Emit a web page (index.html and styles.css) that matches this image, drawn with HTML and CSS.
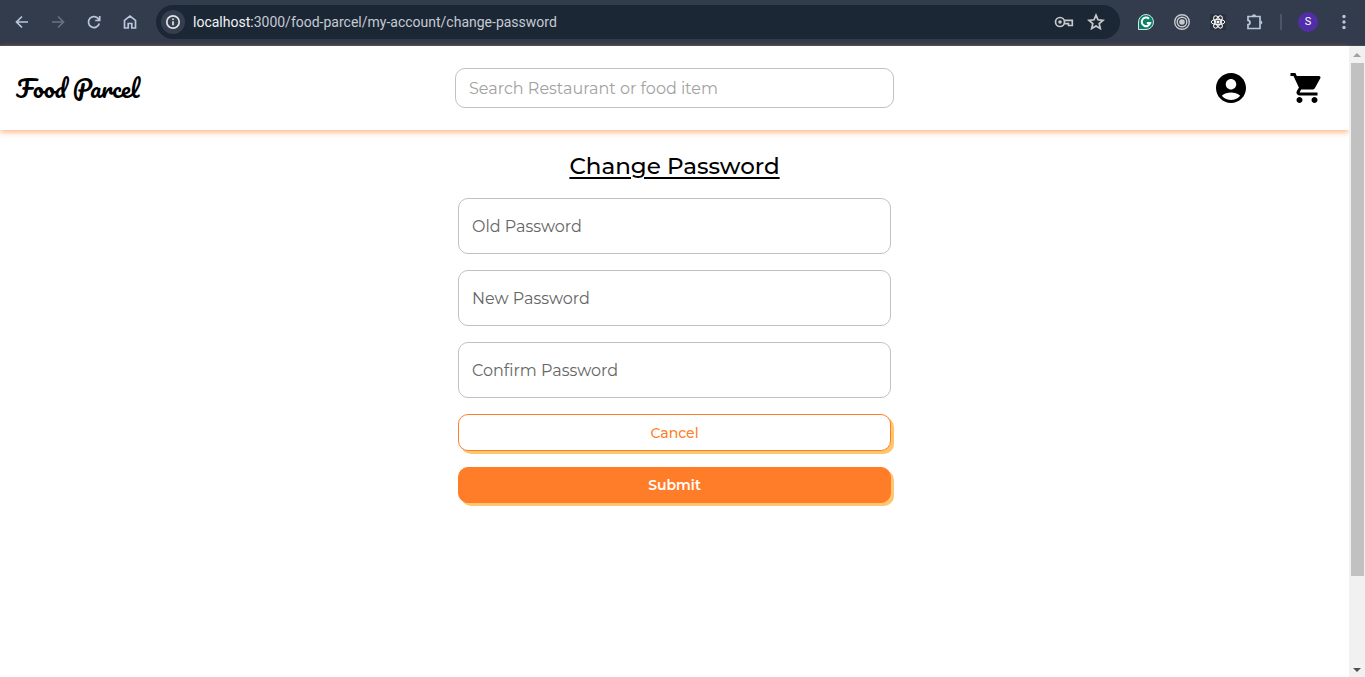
FILE: index.html
```html
<!DOCTYPE html>
<html lang="en">
<head>
<meta charset="utf-8">
<meta name="viewport" content="width=device-width, initial-scale=1">
<title>Food Parcel - Change Password</title>
<link rel="stylesheet" href="styles.css">
</head>
<body>
<div class="toolbar">
  <nav class="toolbar-nav" aria-label="Browser">
    <button class="tool" aria-label="Back"><svg width="16" height="16" viewBox="0 0 16 16"><path d="M14 8H3M8 2.500 2.500 8 8 13.500"/></svg></button>
    <button class="tool tool-off" aria-label="Forward"><svg width="16" height="16" viewBox="0 0 16 16"><path d="M2 8h11M8 2.500 13.500 8 8 13.500"/></svg></button>
    <button class="tool" aria-label="Reload"><svg width="16" height="16" viewBox="0 0 16 16"><path d="M13.300 9.500A5.500 5.500 0 1 1 12.700 5.200L13.500 6.200M13.700 2v4.500H9.200"/></svg></button>
    <button class="tool" aria-label="Home"><svg width="16" height="16" viewBox="0 0 16 16"><path d="M2.500 14V6.300L8 2l5.500 4.300V14H9.800V9.500H6.200V14z"/></svg></button>
  </nav>
  <div class="address">
    <button class="site-info" aria-label="Site information"><svg width="16" height="16" viewBox="0 0 16 16"><circle cx="8" cy="8" r="6.200"/><path d="M8 7.300v4M8 4.500v1.600"/></svg></button>
    <p class="url"><span class="host">localhost:</span>3000/food-parcel/my-account/change-password</p>
    <button class="tool tool-light" aria-label="Passwords"><svg width="20" height="16" viewBox="0 0 20 16"><circle cx="6" cy="8" r="4.500"/><circle cx="6" cy="8" r="1.800" fill="currentColor" stroke="none"/><path d="M10.200 6.300H18.300V11.500H14.500V9.700H10.200"/></svg></button>
    <button class="tool tool-light" aria-label="Bookmark"><svg width="18" height="18" viewBox="0 0 18 18"><path d="m9 2.200 2 4.600 5 .5-3.800 3.300 1.100 4.900L9 12.900l-4.300 2.600 1.100-4.900L2 7.300l5-.5z"/></svg></button>
  </div>
  <div class="extensions">
    <button class="tool" aria-label="Grammar"><svg width="16" height="16" viewBox="0 0 16 16"><path class="g-badge" d="M.5 15.500V8A7.500 7.500 0 1 1 8 15.500z"/><path class="g-mark" d="M11 4.700A4.300 4.300 0 1 0 12.200 9H8.800"/></svg></button>
    <button class="tool tool-light" aria-label="Recorder"><svg class="ring" width="16" height="16" viewBox="0 0 16 16"><circle cx="8" cy="8" r="7.300"/><circle cx="8" cy="8" r="4.800"/><circle cx="8" cy="8" r="2.800" fill="currentColor" stroke="none"/></svg></button>
    <button class="tool react" aria-label="React"><svg class="thin" width="16" height="16" viewBox="0 0 16 16"><ellipse cx="8" cy="8" rx="6.800" ry="2.700"/><ellipse cx="8" cy="8" rx="6.800" ry="2.700" transform="rotate(60 8 8)"/><ellipse cx="8" cy="8" rx="6.800" ry="2.700" transform="rotate(120 8 8)"/><circle cx="8" cy="8" r="1.500" fill="currentColor" stroke="none"/></svg></button>
    <button class="tool" aria-label="Extensions"><svg width="18" height="18" viewBox="0 0 18 18"><path d="M3 3.500h12v12H3v-3.800q2-.2 2-2.200t-2-2.200z"/><path d="M7 3a2 1.800 0 0 1 4 0zM15.500 7.500a1.800 2 0 0 1 0 4z" fill="currentColor" stroke="none"/></svg></button>
    <span class="divider"></span>
    <button class="avatar" aria-label="Profile S">S</button>
    <button class="tool menu" aria-label="Menu"><svg width="16" height="16" viewBox="0 0 16 16"><circle cx="8" cy="2.500" r="1.700"/><circle cx="8" cy="8" r="1.700"/><circle cx="8" cy="13.500" r="1.700"/></svg></button>
  </div>
</div>
<div class="viewport">
  <div class="page">
    <header class="header">
      <a class="brand" href="#">Food Parcel</a>
      <input class="search" type="search" placeholder="Search Restaurant or food item" aria-label="Search Restaurant or food item">
      <nav class="header-links" aria-label="Account">
        <a href="#" aria-label="My account"><svg width="36" height="36" viewBox="0 0 24 24"><path d="M12 2C6.480 2 2 6.480 2 12s4.480 10 10 10 10-4.480 10-10S17.520 2 12 2zm0 4c1.930 0 3.500 1.570 3.500 3.500S13.930 13 12 13s-3.500-1.570-3.500-3.500S10.070 6 12 6zm0 14c-2.030 0-4.430-.82-6.140-2.880C7.550 15.800 9.680 15 12 15s4.450.8 6.140 2.120C16.430 19.180 14.030 20 12 20z"/></svg></a>
        <a href="#" aria-label="Cart"><svg width="36" height="36" viewBox="0 0 24 24"><path d="M7 18c-1.100 0-1.990.9-1.990 2S5.900 22 7 22s2-.9 2-2-.9-2-2-2zM1 2v2h2l3.600 7.590-1.350 2.450c-.16.280-.25.610-.25.960 0 1.100.9 2 2 2h12v-2H7.420c-.14 0-.25-.11-.25-.25l.03-.12.9-1.630h7.450c.75 0 1.410-.41 1.750-1.030l3.580-6.490A1 1 0 0 0 20 4H5.210l-.94-2H1zm16 16c-1.100 0-1.990.9-1.990 2s.89 2 1.990 2 2-.9 2-2-.9-2-2-2z"/></svg></a>
      </nav>
    </header>
    <main>
      <form class="form">
        <h1 class="title">Change Password</h1>
        <input class="field" type="password" placeholder="Old Password" aria-label="Old Password">
        <input class="field" type="password" placeholder="New Password" aria-label="New Password">
        <input class="field" type="password" placeholder="Confirm Password" aria-label="Confirm Password">
        <button class="btn btn-outline" type="button">Cancel</button>
        <button class="btn btn-solid" type="submit">Submit</button>
      </form>
    </main>
  </div>
  <div class="scrollbar" aria-hidden="true">
    <svg class="arrow" width="16" height="17" viewBox="0 0 16 17"><path d="M4 11h8L8 7z" fill="#a0a0a0"/></svg>
    <div class="track"><div class="thumb"></div></div>
    <svg class="arrow" width="16" height="17" viewBox="0 0 16 17"><path d="M4 8h8l-4 4z" fill="#505050"/></svg>
  </div>
</div>
</body>
</html>
```
FILE: styles.css
```css
* { box-sizing: border-box; }

body {
  margin: 0;
  min-height: 100vh;
  display: flex;
  flex-direction: column;
  background: #fff;
  color: #000;
  font-family: Montserrat, Inter, sans-serif;
}

button, input { font-family: inherit; }

/* Browser toolbar */
.toolbar {
  display: flex;
  align-items: center;
  height: 46px;
  padding: 0 11px 2px 12px;
  background: #323c4d;
  border-bottom: 1px solid #454855;
}

.toolbar-nav, .extensions { display: flex; align-items: center; gap: 16px; }

.tool, .site-info, .avatar {
  display: flex;
  align-items: center;
  justify-content: center;
  flex: none;
  width: 20px;
  height: 20px;
  padding: 0;
  border: 0;
  background: none;
  color: #b9c6dc;
}

.tool svg, .site-info svg { flex: none; fill: none; stroke: currentColor; stroke-width: 1.7; }
.tool svg.thin { stroke-width: 1; }
.tool svg.ring { stroke-width: 1.4; }
.tool.menu svg { fill: currentColor; stroke: none; }
.tool-off { color: #69717f; }
.tool-light { color: #c8c9cc; }
.react { color: #fff; }
.react svg { background: #2a313d; }
.tool .g-badge { fill: #0b8068; stroke: #d4e4e2; stroke-width: 1; }
.tool .g-mark { stroke: #fff; stroke-width: 2; }

.address {
  display: flex;
  align-items: center;
  flex: 1;
  gap: 12px;
  height: 34px;
  margin: 0 16px;
  padding: 0 14px 0 5px;
  border-radius: 17px;
  background: #1c2736;
}

.site-info {
  width: 24px;
  height: 24px;
  border-radius: 50%;
  background: #343e4e;
  color: #e3e3e6;
}

.url {
  flex: 1;
  margin: 0 0 0 -4px;
  overflow: hidden;
  color: #c5cad2;
  font: 14px/20px Roboto, sans-serif;
  white-space: nowrap;
}

.host { color: #f2f3f5; }
.divider { width: 2px; height: 16px; background: #4b566a; }

.avatar {
  border-radius: 50%;
  background: #512da8;
  color: #fff;
  font: 11px/20px Roboto, sans-serif;
}

/* Page and scrollbar */
.viewport { display: flex; flex: 1; }
.page { flex: 1; min-width: 0; }

.scrollbar {
  display: flex;
  flex-direction: column;
  width: 16px;
  background: #f1f1f1;
}

.arrow { display: block; flex: none; }
.track { display: flex; flex: 1; padding: 0 1px 0 2px; }
.thumb { flex: 1; height: 86%; background: #c1c1c1; }

.header {
  display: grid;
  grid-template-columns: 1fr minmax(0, 439px) 1fr;
  align-items: center;
  height: 84px;
  padding: 0 16px;
  box-shadow: 0 2px 6px #ff7f2a99;
}

.brand {
  color: #000;
  font: 24px/40px Pacifico, cursive;
  text-decoration: none;
}

.search, .field {
  width: 100%;
  border: 1px solid #c1c1c1;
  border-radius: 10px;
  background: #fff;
  color: #222;
  font-size: 16px;
  outline: 0;
}

.search { height: 40px; padding: 0 13px; appearance: none; }
.search::placeholder { color: #a2a2a2; opacity: 1; }

.header-links { display: flex; justify-content: flex-end; gap: 40px; padding-right: 8px; }
.header-links a { display: flex; color: #000; }
.header-links svg { fill: currentColor; }

.form {
  display: flex;
  flex-direction: column;
  gap: 16px;
  width: 100%;
  max-width: 433px;
  margin: 0 auto;
  padding: 20px 0;
}

.title {
  margin: 0;
  font-size: 23px;
  font-weight: 500;
  line-height: 32px;
  text-align: center;
  text-decoration: underline;
  text-decoration-thickness: 2px;
  text-underline-offset: 3px;
}

.field { height: 56px; padding: 0 13px; }
.field::placeholder { color: #666; opacity: 1; }

.btn {
  height: 37px;
  border: 1px solid #ff7d29;
  border-radius: 10px;
  box-shadow: 3px 3px 0 #ffc66e;
  font-size: 14px;
  line-height: 20px;
}

.btn-outline { background: #fff; color: #ff7d29; font-weight: 500; }
.btn-solid { height: 36px; background: #ff7d29; color: #fff; font-weight: 600; }
```
